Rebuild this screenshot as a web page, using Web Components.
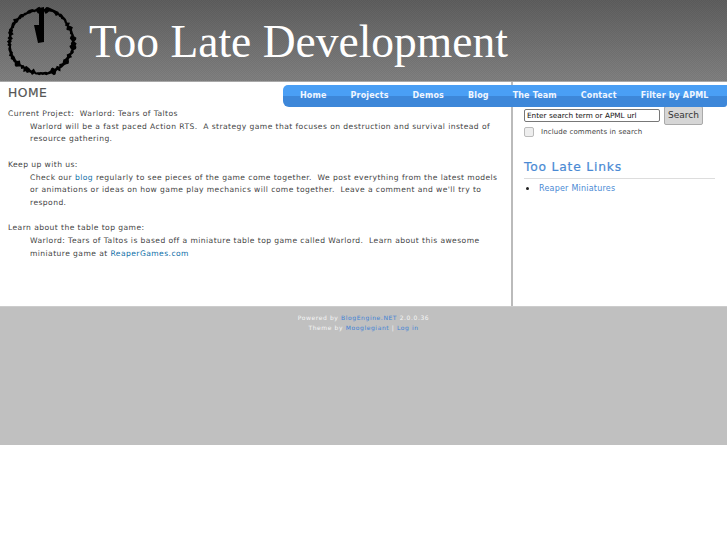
<!DOCTYPE html>
<html><head><meta charset="utf-8"><style>
html,body{margin:0;padding:0;background:#fff}
body{font-family:"DejaVu Sans",sans-serif;font-size:8px;color:#444;width:727px}
</style></head><body>
<site-page>
<site-header slot="header"></site-header>
<site-nav slot="nav"></site-nav>
<main-col slot="main"></main-col>
<side-col slot="side"></side-col>
<site-footer slot="footer"></site-footer>
</site-page>
<script>
function def(name,html){customElements.define(name,class extends HTMLElement{constructor(){super();this.attachShadow({mode:'open'}).innerHTML=html}})}
function clockPath(){
 let s=4242;const r=()=>{s=(s*16807)%2147483647;return s/2147483647};
 const cx=41,cy=41.5;
 const N=120;
 let pts1=[],pts2=[];
 for(let k=0;k<N;k++){const a=k/N*Math.PI*2;const w=1+r()*r()*3.2;const base=32+(r()-.5)*1.2+Math.sin(a*5+1)*.5;
  pts1.push([cx+(base+w)*Math.cos(a),cy+(base+w)*Math.sin(a)]);
  pts2.unshift([cx+(base-w)*Math.cos(a),cy+(base-w)*Math.sin(a)]);}
 const p=a=>'M'+a.map(q=>q[0].toFixed(1)+' '+q[1].toFixed(1)).join('L')+'Z';
 return p(pts1)+p(pts2);
}
def('site-page',`<style>
:host{display:block;position:relative}
.mid{display:flex;height:224px}
</style><slot name="header"></slot><slot name="nav"></slot><div class="mid"><slot name="main"></slot><slot name="side"></slot></div><slot name="footer"></slot>`);
def('site-header',`<style>
:host{display:flex;align-items:flex-start;height:82px;box-sizing:border-box;background:repeating-conic-gradient(rgba(0,0,0,.06) 0 25%,transparent 0 50%) 0 0/2px 2px,linear-gradient(#5f5f5f,#818181);border-bottom:1px solid #a8a8a8}
svg{display:block;flex:none}
h1{margin:12px 0 0 7px;font:400 45.5px/60px "Liberation Serif",serif;color:#fff;white-space:nowrap}
</style><svg width="82" height="81" viewBox="0 0 82 81"><path fill="#000" fill-rule="evenodd" d="${clockPath()}"/><path fill="#000" d="M39 8L44 7L44 42L38 43L34 25L39 25Z"/></svg><h1>Too Late Development</h1>`);
def('site-nav',`<style>
:host{display:block;position:absolute;left:283px;top:85px;width:444px;height:22px;box-sizing:border-box;border-radius:5px 0 3px 6px;background:linear-gradient(#4a9ff5 0,#4a9ff5 50%,#3d87d9 50%,#3d87d9 100%)}
ul{display:flex;margin:0;padding:0 0 0 17px;list-style:none;gap:24px;font:700 8px/21px "DejaVu Sans",sans-serif;letter-spacing:.15px;color:#f0f6ff;white-space:nowrap}
</style><ul><li>Home</li><li>Projects</li><li>Demos</li><li>Blog</li><li>The Team</li><li>Contact</li><li>Filter by APML</li></ul>`);
def('main-col',`<style>
:host{display:block;width:513px;box-sizing:border-box;border-right:2px solid #bbb;padding:4px 0 0 8px;font:7.6px/12.7px "DejaVu Sans",sans-serif;letter-spacing:.42px;color:#444}
h2{margin:0 0 7px;font:400 12.3px/15px "DejaVu Sans",sans-serif;letter-spacing:.5px;color:#555;-webkit-text-stroke:.2px #555}
p{margin:0 0 12.7px}
.in{display:block;padding-left:22px;padding-right:8px}
a{color:#0f6fa8}
</style><h2>HOME</h2>
<p>Current Project:&nbsp; Warlord: Tears of Taltos<span class="in">Warlord will be a fast paced Action RTS.&nbsp; A strategy game that focuses on destruction and survival instead of resource gathering.</span></p>
<p>Keep up with us:<span class="in">Check our <a>blog</a> regularly to see pieces of the game come together.&nbsp; We post everything from the latest models or animations or ideas on how game play mechanics will come together.&nbsp; Leave a comment and we'll try to respond.</span></p>
<p>Learn about the table top game:<span class="in">Warlord: Tears of Taltos is based off a miniature table top game called Warlord.&nbsp; Learn about this awesome miniature game at <a>ReaperGames.com</a></span></p>`);
def('side-col',`<style>
:host{display:block;width:214px;box-sizing:border-box;padding:27px 12px 0 11px;font:7px/12px "DejaVu Sans",sans-serif;color:#444}
.s{display:flex;align-items:flex-start;gap:4px}
.i{width:136px;height:13px;box-sizing:border-box;border:1px solid #777;border-radius:2px;background:#fff;color:#111;font:7.3px/11px "DejaVu Sans",sans-serif;padding:0 2px;white-space:nowrap;overflow:hidden}
.b{width:39px;height:19px;margin-top:-3px;box-sizing:border-box;background:#d6d6d6;border:1px solid #aaa;border-radius:2px;font:9px/17px "DejaVu Sans",sans-serif;color:#333;text-align:center}
.c{display:flex;align-items:center;margin-top:1px;gap:7px;letter-spacing:.1px}
.cb{width:8px;height:8px;border:1px solid #bbb;border-radius:2px;background:#eee;flex:none}
h3{margin:22px 0 0;padding-bottom:3px;font:400 12.3px/15px "DejaVu Sans",sans-serif;letter-spacing:.8px;color:#4a8ad4;-webkit-text-stroke:.2px #4a8ad4;border-bottom:1px solid #ddd}
ul{margin:3px 0 0;padding:0 0 0 15px;letter-spacing:.22px;color:#222;font-size:8px}
li::marker{font-size:11px}
a{color:#4a8ad4}
</style><div class="s"><div class="i">Enter search term or APML url</div><div class="b">Search</div></div>
<div class="c"><span class="cb"></span><span>Include comments in search</span></div>
<h3>Too Late Links</h3><ul><li><a>Reaper Miniatures</a></li></ul>`);
def('site-footer',`<style>
:host{display:block;height:139px;box-sizing:border-box;background:#c0c0c0;border-top:1px solid #ccc;padding-top:6px;text-align:center;font:6px/9.5px "DejaVu Sans",sans-serif;letter-spacing:.6px;color:#f6f6f6}
a{color:#3f82d6}
</style>Powered by <a>BlogEngine.NET</a> 2.0.0.36<br>Theme by <a>Mooglegiant</a> | <a>Log in</a>`);
</script>
</body></html>
